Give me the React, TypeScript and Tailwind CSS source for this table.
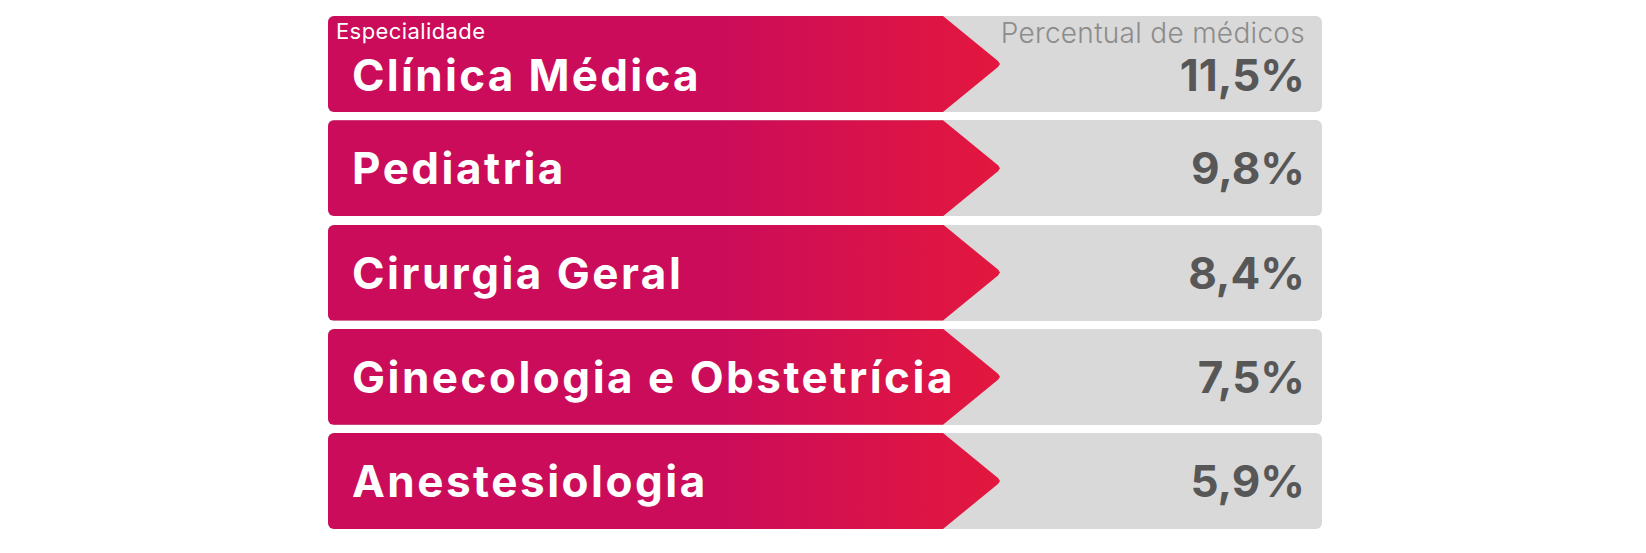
import React from 'react';

const rows = [
  { name: 'Clínica Médica', value: '11,5%' },
  { name: 'Pediatria', value: '9,8%' },
  { name: 'Cirurgia Geral', value: '8,4%' },
  { name: 'Ginecologia e Obstetrícia', value: '7,5%' },
  { name: 'Anestesiologia', value: '5,9%' },
];

export default function App() {
  return (
    <div className="w-[1646px] h-[553px] bg-white font-['Inter',sans-serif]">
      <div className="ml-[328px] pt-[16px] w-[994px] flex flex-col gap-[8.25px]">
        {rows.map((row, i) => (
          <div key={row.name} className="flex h-[96px] rounded-[6px] bg-[#d9d9d9]">
            {/* arrow label */}
            <div className="w-[672px] h-full shrink-0 rounded-l-[6px] bg-[linear-gradient(to_right,#cb0c5a_0%,#cb0c5a_58%,#e3173e_100%)] [clip-path:polygon(0_0,615px_0,670px_47%,672px_50%,670px_53%,615px_100%,0_100%)] flex flex-col text-white">
              {i === 0 ? (
                <>
                  <span className="pl-[8px] pt-[2px] text-[22px] leading-[26px] font-normal tracking-[0.4px]">Especialidade</span>
                  <span className="pl-[24px] mt-[5px] text-[44px] leading-[52px] font-bold tracking-[2.3px]">{row.name}</span>
                </>
              ) : (
                <span className="pl-[24px] my-auto text-[44px] leading-[52px] font-bold tracking-[2.5px]">{row.name}</span>
              )}
            </div>
            {/* value */}
            <div className="flex-1 flex flex-col items-end pr-[17px]">
              {i === 0 ? (
                <>
                  <span className="pt-[1px] text-[28px] leading-[32px] font-light text-[#8c8c8c] tracking-[0.3px]">Percentual de médicos</span>
                  <span className="text-[44px] leading-[52px] font-bold text-[#575757]">{row.value}</span>
                </>
              ) : (
                <span className="my-auto text-[44px] leading-[52px] font-bold text-[#575757]">{row.value}</span>
              )}
            </div>
          </div>
        ))}
      </div>
    </div>
  );
}
